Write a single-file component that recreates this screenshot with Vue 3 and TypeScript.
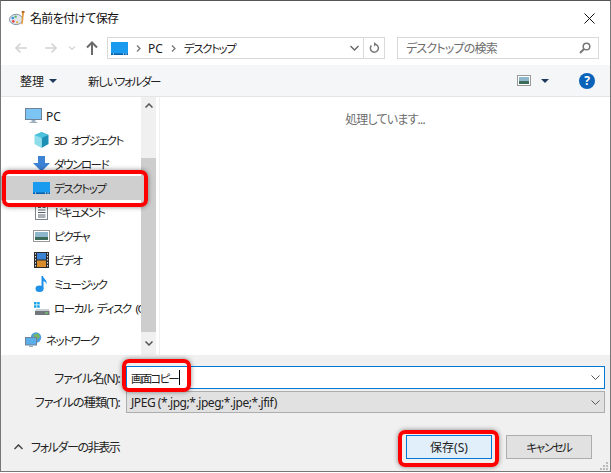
<script setup lang="ts">
const items = [
  { label: 'PC', icon: 'pc', top: true },
  { label: '3D オブジェクト', icon: 'cube' },
  { label: 'ダウンロード', icon: 'down' },
  { label: 'デスクトップ', icon: 'desk' },
  { label: 'ドキュメント', icon: 'doc' },
  { label: 'ピクチャ', icon: 'pic' },
  { label: 'ビデオ', icon: 'video' },
  { label: 'ミュージック', icon: 'music' },
  { label: 'ローカル ディスク (C:)', icon: 'disk' },
  { label: 'ネットワーク', icon: 'net', top: true, gap: true },
]
</script>

<template>
  <div class="dialog">
    <header class="title">
      <svg class="palette" width="17" height="15" viewBox="0 0 18 16">
        <ellipse cx="7.5" cy="9" rx="7" ry="5.5" fill="#dfe6ee" stroke="#7d8ea3" />
        <circle cx="4" cy="7.5" r="1.4" fill="#3a8fd8" />
        <circle cx="7" cy="6" r="1.3" fill="#5cb85c" />
        <circle cx="4.5" cy="11" r="1.4" fill="#e04a4a" />
        <circle cx="8.5" cy="12" r="1.2" fill="#e9b23c" />
        <path d="M14 1l2 .5-1.5 12.5h-1.5z" fill="#e39a3b" />
        <path d="M13.5 0h3v2h-3z" fill="#b5651d" />
      </svg>
      <span class="title-text">名前を付けて保存</span>
      <svg class="close" width="11" height="11" viewBox="0 0 11 11">
        <path d="M.5.5l10 10M10.5.5l-10 10" stroke="#111" fill="none" />
      </svg>
    </header>

    <div class="nav">
      <div class="nav-buttons">
        <svg width="14" height="12" viewBox="0 0 14 12"><path d="M13 6H2M6.500 1.500L2 6l4.500 4.500" stroke="#d4d4d4" stroke-width="1.700" fill="none" /></svg>
        <svg class="fwd" width="14" height="12" viewBox="0 0 14 12"><path d="M1 6h11M7.500 1.500L12 6l-4.500 4.500" stroke="#d4d4d4" stroke-width="1.700" fill="none" /></svg>
        <svg class="recent" width="8" height="6" viewBox="0 0 8 6"><path d="M1 1.500l3 3 3-3" stroke="#d4d4d4" stroke-width="1.200" fill="none" /></svg>
        <svg class="up" width="12" height="14" viewBox="0 0 12 14"><path d="M6 14V2M1 6.500L6 1.500l5 5" stroke="#6b6b6b" stroke-width="2" fill="none" /></svg>
      </div>
      <div class="address">
        <svg class="desk-small" width="17" height="13" viewBox="0 0 17 13">
          <rect width="17" height="13" fill="#1b9bf0" />
          <rect y="11.500" width="17" height="1.500" fill="#0a5fa8" />
          <path d="M2 12h1M12 12h1M14.500 12h1" stroke="#fff" />
        </svg>
        <svg class="crumb" width="5" height="7" viewBox="0 0 5 7"><path d="M1 .5l3 3-3 3" stroke="#777" stroke-width="1.300" fill="none" /></svg>
        <span class="pc-crumb">PC</span>
        <svg class="crumb" width="5" height="7" viewBox="0 0 5 7"><path d="M1 .5l3 3-3 3" stroke="#777" stroke-width="1.300" fill="none" /></svg>
        <span class="desk-crumb kana">デスクトップ</span>
        <svg class="addr-drop" width="9" height="6" viewBox="0 0 9 6"><path d="M.5 1l4 4 4-4" stroke="#666" stroke-width="1.400" fill="none" /></svg>
        <div class="refresh">
          <svg width="11" height="12" viewBox="0 0 11 12"><path d="M6 2.200a4 4 0 1 1-3.600 1.300" stroke="#777" stroke-width="1.500" fill="none" /><path d="M5 0v4.500l2.500-2.200z" fill="#777" /></svg>
        </div>
      </div>
      <div class="search">
        <span class="mixed">デスクトップの検索</span>
        <svg width="12" height="12" viewBox="0 0 12 12"><circle cx="7.500" cy="4.500" r="3.300" stroke="#777" stroke-width="1.500" fill="none" /><path d="M5 7l-4 4" stroke="#777" stroke-width="2" /></svg>
      </div>
    </div>

    <div class="toolbar">
      <span class="organize">整理</span>
      <i class="tri"></i>
      <span class="new-folder kana">新しいフォルダー</span>
      <svg class="view" width="14" height="11" viewBox="0 0 14 11">
        <rect x=".5" y=".5" width="13" height="10" fill="#fff" stroke="#999" />
        <rect x="2" y="2" width="10" height="4" fill="#8fb7cc" />
        <rect x="2" y="6" width="10" height="3" fill="#3d6b5a" />
      </svg>
      <i class="tri view-tri"></i>
      <span class="help">?</span>
    </div>

    <div class="main">
      <aside class="side">
        <ul class="tree">
          <li v-for="it in items" :key="it.label" class="row" :class="{ top: it.top, gap: it.gap, sel: it.icon === 'desk' }">
            <svg class="ico" width="17" height="16" viewBox="0 0 17 16">
              <template v-if="it.icon === 'pc'">
                <rect x=".5" y=".5" width="16" height="11" fill="#7cc4f4" stroke="#6f8296" />
                <path d="M6.500 12h4v2h-4zM4.500 14h8v1h-8z" fill="#9fb0c0" />
              </template>
              <template v-else-if="it.icon === 'cube'">
                <path d="M8.500 0l7 3v9l-7 4z" fill="#1d8fb4" />
                <path d="M8.500 0l-7 3v9l7 4z" fill="#8fdcea" />
                <path d="M8.500 6l7-3-7-3-7 3z" fill="#4cc2dc" />
              </template>
              <template v-else-if="it.icon === 'down'">
                <path d="M5 0h7v7h5l-8.500 8.500L0 7h5z" fill="#3c83d6" />
              </template>
              <template v-else-if="it.icon === 'desk'">
                <rect y="2" width="17" height="12" fill="#1b9bf0" />
                <rect y="12.500" width="17" height="1.500" fill="#0a5fa8" />
                <path d="M2 13h1M12 13h1M14.500 13h1" stroke="#fff" />
              </template>
              <template v-else-if="it.icon === 'doc'">
                <rect x="2.500" y=".5" width="12" height="15" fill="#fff" stroke="#7d8590" />
                <path d="M5 3.500h3M9.500 3.500h3M5 6h7.500M5 8.500h7.500M5 11h7.500M5 13h7.500" stroke="#55606c" />
              </template>
              <template v-else-if="it.icon === 'pic'">
                <rect x=".5" y="2.500" width="16" height="11" fill="#fff" stroke="#999" />
                <rect x="2" y="4" width="13" height="5" fill="#8fb7cc" />
                <rect x="2" y="9" width="13" height="3" fill="#3d6b5a" />
              </template>
              <template v-else-if="it.icon === 'video'">
                <rect x="1" width="15" height="16" fill="#2a2a2a" />
                <rect x="4" y="1" width="9" height="6.500" fill="#3c83d6" />
                <rect x="4" y="8.500" width="9" height="6.500" fill="#d98a2b" />
                <path d="M2.500 1v14M14.500 1v14" stroke="#ddd" stroke-dasharray="1.500 1.500" />
              </template>
              <template v-else-if="it.icon === 'music'">
                <ellipse cx="6.500" cy="12.800" rx="4" ry="3.200" fill="#1e90e8" />
                <path d="M8.500 13V0h1.500c.5 3 4.500 4 3.500 8.500-.5-2.500-2-3-3-3.500v8z" fill="#1e90e8" />
              </template>
              <template v-else-if="it.icon === 'disk'">
                <path d="M1 2h2.500v2.500H1zM4.200 2h2.500v2.500H4.200zM1 5.200h2.500v2.500H1zM4.200 5.200h2.500v2.500H4.200z" fill="#17a3e8" />
                <path d="M3 9h13l.5 2H2z" fill="#c9ced3" />
                <rect x="2" y="11" width="14.500" height="4" fill="#70767c" />
                <rect x="12" y="12.500" width="3" height="1" fill="#7be060" />
              </template>
              <template v-else>
                <circle cx="11" cy="5.500" r="5.200" fill="#4f9fdc" />
                <path d="M8 2c2 1 4 0 5-1l2 4-4 3z" fill="#79b85e" />
                <rect x=".5" y="5.500" width="11" height="7.500" fill="#5aaeea" stroke="#6f8296" />
                <path d="M4 13.500h4v1.500h-4z" fill="#9fb0c0" />
              </template>
            </svg>
            <span class="lab" :class="{ kana: it.label !== 'PC' }">{{ it.label }}</span>
          </li>
        </ul>
        <div class="scroll">
          <svg width="8" height="5" viewBox="0 0 8 5"><path d="M.5 4.500L4 1l3.500 3.500" stroke="#555" stroke-width="1.500" fill="none" /></svg>
          <div class="thumb"></div>
          <svg width="8" height="5" viewBox="0 0 8 5"><path d="M.5.5L4 4l3.500-3.500" stroke="#555" stroke-width="1.500" fill="none" /></svg>
        </div>
      </aside>
      <section class="content"><span class="mixed">処理しています...</span></section>
    </div>

    <div class="bottom">
      <div class="fields">
        <label class="f-label mixed">ファイル名(N):</label>
        <div class="input">
          <span class="kana name-text">画面コピー</span><i class="caret"></i>
          <svg class="drop" width="9" height="5" viewBox="0 0 9 5"><path d="M.5.5l4 4 4-4" stroke="#555" fill="none" /></svg>
        </div>
        <label class="f-label mixed">ファイルの種類(T):</label>
        <div class="select">
          <span class="latin">JPEG (*.jpg;*.jpeg;*.jpe;*.jfif)</span>
          <svg class="drop" width="9" height="5" viewBox="0 0 9 5"><path d="M.5.5l4 4 4-4" stroke="#555" fill="none" /></svg>
        </div>
      </div>
      <div class="footer">
        <svg class="hide-ico" width="9" height="6" viewBox="0 0 9 6"><path d="M.5 5l4-4 4 4" stroke="#444" stroke-width="1.500" fill="none" /></svg>
        <span class="hide">フォルダーの非表示</span>
        <button class="btn primary">保存(S)</button>
        <button class="btn"><span class="kana">キャンセル</span></button>
      </div>
      <svg class="grip" width="9" height="9" viewBox="0 0 9 9"><path d="M6 0h2v2H6zM3 3h2v2H3zM6 3h2v2H6zM0 6h2v2H0zM3 6h2v2H3zM6 6h2v2H6z" fill="#bbb" /></svg>
    </div>

    <div class="mark mark-desk"></div>
    <div class="mark mark-name"></div>
    <div class="mark mark-save"></div>
  </div>
</template>

<style scoped>
.dialog {
  position: relative;
  width: 611px;
  height: 472px;
  box-sizing: border-box;
  border: 1px solid #777;
  border-top: 1px solid #555;
  background: #fff;
  display: flex;
  flex-direction: column;
  font-family: "Noto Sans", "Noto Sans CJK JP", sans-serif;
  font-size: 12px;
  font-feature-settings: "palt";
  color: #222;
  overflow: hidden;
}
.kana { font-size: 11.500px; letter-spacing: -1.400px; word-spacing: 3px; }
.mixed { letter-spacing: -0.800px; }
.latin { letter-spacing: -0.440px; }
.title {
  height: 34px;
  display: flex;
  align-items: center;
  padding: 0 15px 0 8px;
  flex: none;
}
.title-text {
  margin-left: 4px;
  letter-spacing: -0.700px;
  color: #111;
}
.close { margin-left: auto; }
.nav {
  height: 30px;
  flex: none;
  display: flex;
  align-items: center;
  padding-bottom: 4px;
  box-sizing: border-box;
}
.nav-buttons {
  width: 106px;
  flex: none;
  display: flex;
  align-items: center;
  padding-left: 13px;
  box-sizing: border-box;
}
.fwd { margin-left: 16px; }
.recent { margin-left: 10px; }
.up { margin-left: 10px; }
.address {
  width: 278px;
  height: 22px;
  box-sizing: border-box;
  border: 1px solid #d9d9d9;
  display: flex;
  align-items: center;
  padding-left: 3px;
  flex: none;
}
.crumb { margin-left: 8px; }
.pc-crumb { margin-left: 7px; }
.desk-crumb { margin-left: 8px; }
.addr-drop { margin-left: auto; margin-right: 4px; }
.refresh {
  width: 20px;
  height: 20px;
  border-left: 1px solid #d9d9d9;
  display: flex;
  align-items: center;
  justify-content: center;
}
.search {
  margin-left: 12px;
  width: 202px;
  height: 22px;
  box-sizing: border-box;
  border: 1px solid #d9d9d9;
  display: flex;
  align-items: center;
  justify-content: space-between;
  padding: 0 7px 0 8px;
  color: #6d6d6d;
}
.toolbar {
  height: 32px;
  box-sizing: border-box;
  flex: none;
  background: #f5f6f7;
  border-bottom: 1px solid #e5e5e5;
  display: flex;
  align-items: center;
  padding-left: 19px;
}
.tri {
  width: 0;
  height: 0;
  border-left: 4px solid transparent;
  border-right: 4px solid transparent;
  border-top: 4px solid #1f3a5c;
  margin-left: 5px;
}
.new-folder { margin-left: 31px; }
.view { margin-left: auto; }
.view-tri { margin-left: 10px; }
.help {
  width: 16px;
  height: 16px;
  border-radius: 50%;
  background: #0a63b8;
  color: #fff;
  font-weight: 700;
  font-size: 12px;
  line-height: 16px;
  text-align: center;
  margin: 0 15px 0 30px;
}
.main {
  flex: 1;
  min-height: 0;
  display: flex;
}
.side {
  width: 158px;
  flex: none;
  display: flex;
  box-sizing: border-box;
}
.tree {
  list-style: none;
  margin: 0;
  padding: 7px 0 0;
  width: 140px;
  flex: none;
  overflow: hidden;
}
.row {
  height: 24px;
  display: flex;
  align-items: center;
  padding-left: 32px;
  white-space: nowrap;
  box-sizing: border-box;
}
.row.top { padding-left: 24px; }
.row.gap { margin-top: 8px; }
.row.sel { background: #cfcfcf; }
.lab { margin-left: 4px; color: #222; }
.ico { flex: none; }
.scroll {
  width: 15px;
  flex: none;
  background: #f0f0f0;
  display: flex;
  flex-direction: column;
  align-items: center;
  padding-top: 6px;
  box-sizing: border-box;
}
.thumb {
  width: 100%;
  height: 174px;
  background: #cdcdcd;
  margin: 50px 0 9px;
}
.content {
  flex: 1;
  text-align: center;
  padding: 13px 0 0 0;
  color: #6d6d6d;
  border-left: 1px solid #f0f0f0;
}
.bottom {
  position: relative;
  height: 116px;
  box-sizing: border-box;
  flex: none;
  background: #f0f0f0;
  padding: 11px 5px 0 0;
}
.fields {
  display: grid;
  grid-template-columns: 119px 1fr;
  column-gap: 6px;
  row-gap: 2px;
  align-items: center;
}
.f-label { text-align: right; }
.input, .select {
  box-sizing: border-box;
  display: flex;
  align-items: center;
  padding-left: 4px;
}
.input {
  height: 23px;
  background: #fff;
  border: 1px solid #0078d7;
}
.select {
  height: 22px;
  background: #e1e1e1;
  border: 1px solid #adadad;
}
.name-text { letter-spacing: -1.800px; }
.caret {
  width: 1px;
  height: 15px;
  background: #000;
  margin-left: 1px;
}
.drop { margin-left: auto; margin-right: 4px; }
.footer {
  display: flex;
  align-items: center;
  margin-top: 22px;
  padding-left: 13px;
}
.hide { margin-left: 8px; letter-spacing: -1.400px; }
.btn {
  height: 24px;
  width: 86px;
  box-sizing: border-box;
  border: 1px solid #adadad;
  background: #e1e1e1;
  font: inherit;
  font-feature-settings: inherit;
  color: #222;
  padding: 0;
}
.primary {
  margin-left: auto;
  border: 1px solid #0078d7;
  background: #e1effa;
  margin-right: 14px;
}
.footer .btn:last-child { margin-right: 13px; }
.grip { position: absolute; right: 1px; bottom: 0; }
.mark {
  position: absolute;
  box-sizing: border-box;
  border: 4px solid #f00;
  border-radius: 7px;
  box-shadow: 0 0 5px rgba(0, 0, 0, 0.450);
}
.mark-desk { left: 1px; top: 169px; width: 146px; height: 37px; }
.mark-name { left: 121px; top: 358px; width: 69px; height: 33px; }
.mark-save { left: 397px; top: 429px; width: 101px; height: 37px; }
</style>

<style>
html, body { margin: 0; background: #fff; }
</style>
